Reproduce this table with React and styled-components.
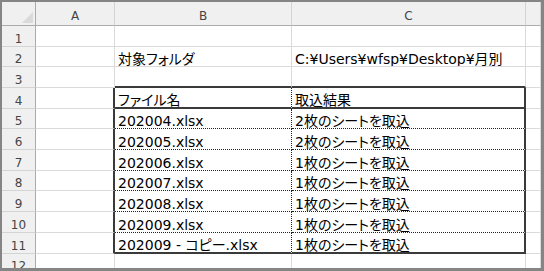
import React from "react";
import styled, { createGlobalStyle } from "styled-components";

const Global = createGlobalStyle`
  html, body { margin: 0; padding: 0; background: #fff; }
  body { width: 544px; height: 271px; overflow: hidden; }
`;

const Frame = styled.div`
  box-sizing: border-box;
  width: 544px;
  height: 271px;
  border-style: solid;
  border-color: #858585;
  border-width: 2px 3px 3px 2px;
  overflow: hidden;
  background: #fff;
`;

const Sheet = styled.div`
  display: grid;
  grid-template-columns: 34px 79px 177px 234px 1fr;
  grid-template-rows: 24px ${(p) => p.$rows.map((h) => h + "px").join(" ")};
  font-family: "DejaVu Sans", "Noto Sans CJK JP", sans-serif;
  font-feature-settings: "palt";
`;

const Corner = styled.div`
  position: relative;
  box-sizing: border-box;
  background: #f0f0f0;
  border-right: 1px solid #ababab;
  border-bottom: 1px solid #ababab;
  &::after {
    content: "";
    position: absolute;
    right: 2px;
    bottom: 2px;
    width: 0;
    height: 0;
    border-style: solid;
    border-width: 0 0 11px 11px;
    border-color: transparent transparent #dadada transparent;
  }
`;

const ColHead = styled.div`
  box-sizing: border-box;
  background: #f0f0f0;
  border-right: 1px solid #d4d4d4;
  border-bottom: 1px solid #ababab;
  display: flex;
  align-items: center;
  justify-content: center;
  font-size: 12px;
  color: #444;
  padding-top: 4px;
`;

const RowHead = styled.div`
  box-sizing: border-box;
  background: #f0f0f0;
  border-right: 1px solid #ababab;
  border-bottom: 1px solid #d4d4d4;
  display: flex;
  align-items: center;
  justify-content: center;
  font-size: 12px;
  color: #444;
  padding-top: 5px;
`;

const GRID = "1px solid #dadada";
const DARK = "2px solid #3a3a3a";
const DOT = "1px dotted #222";

const Cell = styled.div`
  box-sizing: border-box;
  border-right: ${(p) => p.$right};
  border-bottom: ${(p) => p.$bottom};
  display: flex;
  align-items: flex-end;
  padding: 0 0 0 3px;
  font-size: 14px;
  line-height: 14px;
  color: #000;
  white-space: nowrap;
  overflow: hidden;
`;

const rowHeights = [21, 20, 21, 21, 20, 21, 21, 20, 21, 21, 21, 20];

const content = {
  2: ["", "対象フォルダ", "C:¥Users¥wfsp¥Desktop¥月別", ""],
  4: ["", "ファイル名", "取込結果", ""],
  5: ["", "202004.xlsx", "2枚のシートを取込", ""],
  6: ["", "202005.xlsx", "2枚のシートを取込", ""],
  7: ["", "202006.xlsx", "1枚のシートを取込", ""],
  8: ["", "202007.xlsx", "1枚のシートを取込", ""],
  9: ["", "202008.xlsx", "1枚のシートを取込", ""],
  10: ["", "202009.xlsx", "1枚のシートを取込", ""],
  11: ["", "202009 - コピー.xlsx", "1枚のシートを取込", ""],
};

const inTable = (r) => r >= 4 && r <= 11;

function borders(r, c) {
  let bottom = GRID;
  let right = GRID;
  const tableCol = c === 1 || c === 2;
  if (tableCol && (r === 3 || r === 4 || r === 11)) bottom = DARK;
  else if (tableCol && r >= 5 && r <= 10) bottom = DOT;
  if (inTable(r)) {
    if (c === 0 || c === 2) right = DARK;
    else if (c === 1) right = DOT;
  }
  return { right, bottom };
}

export default function App() {
  const rows = rowHeights.map((_, i) => i + 1);
  return (
    <>
      <Global />
      <Frame>
        <Sheet $rows={rowHeights}>
          <Corner />
          {["A", "B", "C", ""].map((l, i) => (
            <ColHead key={"h" + i}>{l}</ColHead>
          ))}
          {rows.map((r) => (
            <React.Fragment key={r}>
              <RowHead>{r}</RowHead>
              {[0, 1, 2, 3].map((c) => {
                const b = borders(r, c);
                const text = content[r] ? content[r][c] : "";
                return (
                  <Cell key={c} $right={b.right} $bottom={b.bottom}>
                    {text}
                  </Cell>
                );
              })}
            </React.Fragment>
          ))}
        </Sheet>
      </Frame>
    </>
  );
}
